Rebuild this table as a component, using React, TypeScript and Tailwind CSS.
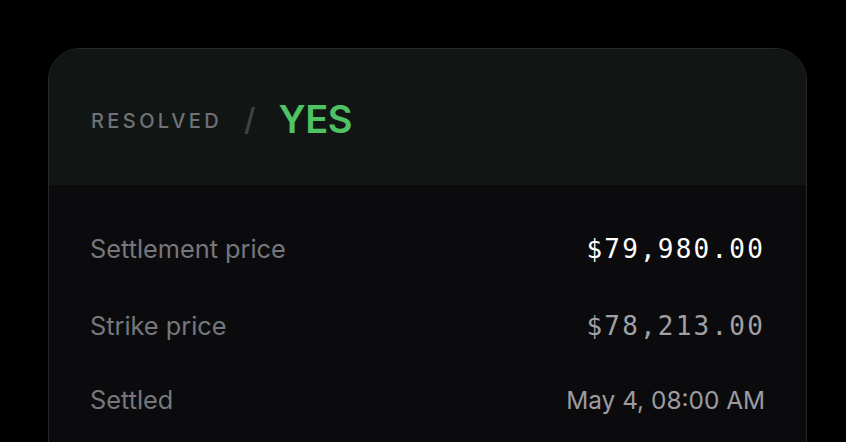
import React from "react";

export default function App() {
  return (
    <div className="w-[846px] h-[442px] bg-black overflow-hidden pt-[48px] pl-[48px]" style={{ fontFamily: "Inter, 'Noto Sans', sans-serif" }}>
      <div className="w-[759px] h-[460px] rounded-t-[32px] border border-[#26282a] bg-[#0b0b0d] overflow-hidden">
        <div className="h-[136px] bg-[#111614] flex items-center px-[42px] pt-[3px]">
          <span className="text-[20px] tracking-[0.17em] text-[#6f7276] font-medium leading-none mt-[4px]">RESOLVED</span>
          <span className="text-[31px] font-medium text-[#404442] ml-[22px] mr-[23px] leading-none mt-[2px]">/</span>
          <span className="text-[38px] font-semibold text-[#4fc263] leading-none tracking-[-0.01em]">YES</span>
        </div>
        <div className="px-[41px] pt-[41px]">
          <div className="h-[46px] flex items-center justify-between">
            <span className="text-[25.3px] text-[#76777c]">Settlement price</span>
            <span className="text-[26px] text-white tracking-[2.2px]" style={{ fontFamily: "'DejaVu Sans Mono', monospace" }}>$79,980.00</span>
          </div>
          <div className="h-[46px] mt-[31px] flex items-center justify-between">
            <span className="text-[25.3px] text-[#76777c]">Strike price</span>
            <span className="text-[26px] text-[#a0a0a6] tracking-[2.2px]" style={{ fontFamily: "'DejaVu Sans Mono', monospace" }}>$78,213.00</span>
          </div>
          <div className="h-[46px] mt-[28px] flex items-center justify-between">
            <span className="text-[25.3px] text-[#76777c]">Settled</span>
            <span className="text-[24.4px] text-[#9c9ca2]">May 4, 08:00 AM</span>
          </div>
        </div>
      </div>
    </div>
  );
}
